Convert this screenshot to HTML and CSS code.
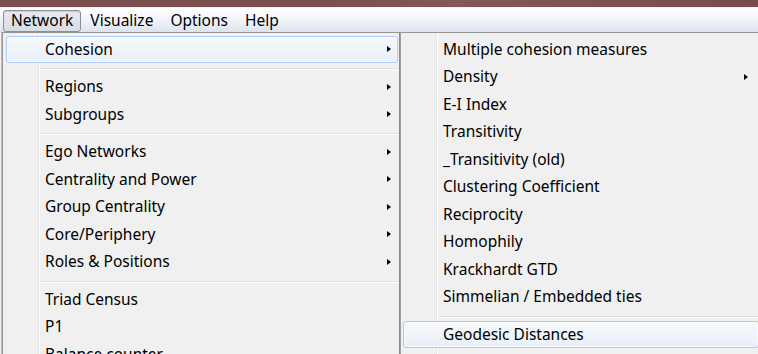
FILE: index.html
```html
<!DOCTYPE html>
<html>
<head>
<meta charset="utf-8">
<link rel="stylesheet" href="styles.css">
</head>
<body>
<div class="window">
  <div class="titlebar"></div>
  <nav class="menubar">
    <span class="mb-item active">Network</span>
    <span class="mb-item">Visualize</span>
    <span class="mb-item">Options</span>
    <span class="mb-item">Help</span>
  </nav>
  <div class="workspace">
    <div class="edge"></div>
    <ul class="menu main">
      <li class="item hot has-sub">Cohesion</li>
      <li class="sep"></li>
      <li class="item has-sub">Regions</li>
      <li class="item has-sub">Subgroups</li>
      <li class="sep"></li>
      <li class="item has-sub">Ego Networks</li>
      <li class="item has-sub">Centrality and Power</li>
      <li class="item has-sub">Group Centrality</li>
      <li class="item has-sub">Core/Periphery</li>
      <li class="item has-sub">Roles &amp; Positions</li>
      <li class="sep"></li>
      <li class="item">Triad Census</li>
      <li class="item">P1</li>
      <li class="item">Balance counter</li>
    </ul>
    <ul class="menu sub">
      <li class="item">Multiple cohesion measures</li>
      <li class="item has-sub">Density</li>
      <li class="item">E-I Index</li>
      <li class="item">Transitivity</li>
      <li class="item">_Transitivity (old)</li>
      <li class="item">Clustering Coefficient</li>
      <li class="item">Reciprocity</li>
      <li class="item">Homophily</li>
      <li class="item">Krackhardt GTD</li>
      <li class="item">Simmelian / Embedded ties</li>
      <li class="sep"></li>
      <li class="item hot">Geodesic Distances</li>
    </ul>
  </div>
</div>
</body>
</html>
```

FILE: styles.css
```css
html, body {
  margin: 0;
  padding: 0;
}
body {
  width: 758px;
  height: 354px;
  overflow: hidden;
  background: #ececec;
  font-family: "Noto Sans", "Open Sans", sans-serif;
  font-size: 15.5px;
  color: #000;
}
.window {
  width: 758px;
  height: 354px;
  overflow: hidden;
}
.titlebar {
  height: 7px;
  background: linear-gradient(to right, #7d5050, #7a4e4e 40%, #835858 60%, #784c4c);
}
.menubar {
  height: 25px;
  display: flex;
  align-items: center;
  padding-left: 3px;
  box-sizing: border-box;
  border-top: 1px solid #f4f4f6;
  background: linear-gradient(to bottom, #ffffff 0%, #f7f9fc 25%, #e9eef6 70%, #dce3ef 100%);
}
.mb-item {
  height: 22px;
  line-height: 19px;
  box-sizing: border-box;
  padding: 0 7px;
  border: 1px solid transparent;
  border-radius: 3px;
  margin-right: 1px;
  margin-top: 2px;
}
.mb-item.active {
  border-color: #8d8f93;
  background: linear-gradient(to bottom, #e6eaf0, #d7dde6);
  box-shadow: inset 0 1px 1px rgba(0,0,0,0.12);
}
.workspace {
  display: flex;
  align-items: flex-start;
  height: 322px;
  overflow: hidden;
}
.edge {
  width: 2px;
  height: 100%;
  background: linear-gradient(to right, #f2f2f2 1px, #b8b8b8 1px);
  flex: none;
}
.menu {
  list-style: none;
  margin: 0;
  padding: 2.5px 0 0;
  box-sizing: border-box;
  border: 1px solid #979797;
  border-bottom: none;
  height: 340px;
  flex: none;
  background-color: #f0f0f0;
  background-image: linear-gradient(to right, transparent 35px, #e2e3e3 35px, #e2e3e3 36px, #ffffff 36px, #ffffff 37px, transparent 37px);
  background-origin: padding-box;
}
.main {
  width: 398px;
  border-right-color: #8a8a8a;
}
.sub {
  width: 361px;
  border-left-color: #a0a0a0;
}
.item {
  height: 27.5px;
  line-height: 25px;
  box-sizing: border-box;
  border: 1px solid transparent;
  border-radius: 3px;
  padding-left: 38px;
  position: relative;
  white-space: nowrap;
}
.main .item {
  margin: 0 1px 0 3px;
}
.sub .item {
  margin: 0 1px 0 2px;
  padding-left: 39px;
}
.item.hot {
  border-color: #a9cbf5;
  background: linear-gradient(to bottom, rgba(246,249,253,0.85), rgba(232,239,250,0.85));
  box-shadow: inset 0 0 0 1px rgba(255,255,255,0.55);
}
.item.has-sub::after {
  content: "";
  position: absolute;
  top: 9.5px;
  width: 0;
  height: 0;
  border-left: 4px solid #000;
  border-top: 3.5px solid transparent;
  border-bottom: 3.5px solid transparent;
}
.main .item.has-sub::after {
  right: 6px;
}
.sub .item.has-sub::after {
  right: 10px;
}
.sep {
  height: 10px;
  box-sizing: border-box;
  padding-top: 5px;
}
.sep:first-of-type {
  height: 10.5px;
}
.sep::before {
  content: "";
  display: block;
  height: 1px;
  border-bottom: 1px solid #ffffff;
  background: #e0e0e0;
  margin-left: 37px;
}
```
